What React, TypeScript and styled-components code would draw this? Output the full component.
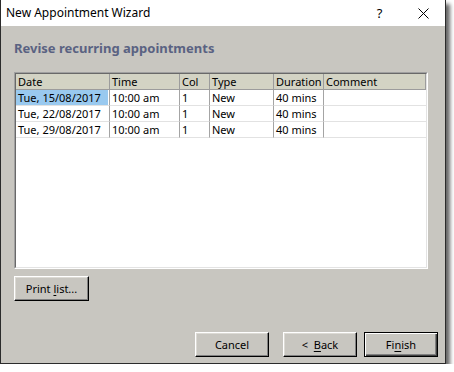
import React from "react";
import styled, { createGlobalStyle } from "styled-components";

const Global = createGlobalStyle`
  html, body { margin: 0; padding: 0; background: #ffffff; }
  * { box-sizing: border-box; }
`;

const FONT = `"Noto Sans", "Liberation Sans", Arial, sans-serif`;

const Dialog = styled.div`
  width: 446px;
  height: 364px;
  display: flex;
  flex-direction: column;
  background: #c8c6c0;
  border: 1px solid #2b2b2b;
  border-top: none;
  box-shadow: 4px 4px 4px rgba(0, 0, 0, 0.6);
  font-family: ${FONT};
`;

const TitleBar = styled.div`
  height: 26px;
  flex: none;
  display: flex;
  align-items: center;
  background: #ffffff;
  padding-left: 5px;
`;

const TitleText = styled.div`
  flex: 1;
  font-size: 12px;
  color: #000;
  line-height: 16px;
`;

const CaptionButton = styled.div<{ $w: number }>`
  width: ${(p) => p.$w}px;
  height: 26px;
  display: flex;
  align-items: center;
  justify-content: center;
  font-size: 13px;
  color: #000;
`;

const Body = styled.div`
  flex: 1;
  display: flex;
  flex-direction: column;
  align-items: flex-start;
  padding: 14px 7px 6px 13px;
`;

const Heading = styled.div`
  font-size: 13px;
  font-weight: 700;
  line-height: 16px;
  color: #5a6282;
`;

const ListFrame = styled.div`
  margin-top: 16px;
  width: 414px;
  height: 197px;
  display: flex;
  border-style: solid;
  border-width: 1px;
  border-color: #a0a0a0 #ffffff #ffffff #a0a0a0;
`;

const ListInner = styled.div`
  flex: 1;
  background: #ffffff;
  border-style: solid;
  border-width: 1px;
  border-color: #696969 #e3e3e3 #e3e3e3 #696969;
`;

const Grid = styled.div`
  display: grid;
  grid-template-columns: 94px 70px 30px 64px 50px 102px;
  align-content: start;
`;

const HeaderCell = styled.div`
  height: 16px;
  padding-left: 2px;
  background: #d3d3c4;
  border-right: 1px solid #9c9c9c;
  border-bottom: 1px solid #9c9c9c;
  font-size: 11px;
  line-height: 15px;
  color: #000;
  white-space: nowrap;
  overflow: hidden;
`;

const Cell = styled.div<{ $last?: boolean }>`
  height: 16px;
  padding-left: 2px;
  border-right: ${(p) => (p.$last ? "none" : "1px solid #a4a4a4")};
  border-bottom: 1px solid #e2e2e2;
  font-size: 11px;
  line-height: 15px;
  color: #000;
  white-space: nowrap;
  overflow: hidden;
`;

const Selection = styled.span`
  display: block;
  margin-left: -2px;
  padding-left: 2px;
  margin-right: 1px;
  background: #99c9ef;
`;

const Button = styled.button<{ $default?: boolean; $w?: number; $gapAfter?: number }>`
  width: ${(p) => p.$w ?? 74}px;
  height: 25px;
  padding: 0;
  margin: 0 ${(p) => p.$gapAfter ?? 0}px 0 0;
  background: #c8c6c0;
  font-family: ${FONT};
  font-size: 11px;
  line-height: 15px;
  color: #000;
  border-style: solid;
  border-width: 1px;
  border-color: ${(p) =>
    p.$default ? "#000 #000 #000 #000" : "#ffffff #000000 #000000 #ffffff"};
  box-shadow: ${(p) =>
    p.$default
      ? "inset 1px 1px #ffffff, inset -1px -1px #404040, inset -2px -2px #808080"
      : "inset -1px -1px #808080, inset 1px 1px #dcdad4"};
  display: flex;
  align-items: center;
  justify-content: center;
  cursor: default;
`;

const Key = styled.span`
  text-decoration: underline;
  text-underline-offset: 2px;
`;

const PrintButton = styled(Button)`
  margin-top: 7px;
`;

const Footer = styled.div`
  margin-top: auto;
  align-self: stretch;
  display: flex;
  justify-content: flex-end;
  gap: 7px;
`;

type Row = { date: string; time: string; col: string; type: string; dur: string; comment: string };

const rows: Row[] = [
  { date: "Tue, 15/08/2017", time: "10:00 am", col: "1", type: "New", dur: "40 mins", comment: "" },
  { date: "Tue, 22/08/2017", time: "10:00 am", col: "1", type: "New", dur: "40 mins", comment: "" },
  { date: "Tue, 29/08/2017", time: "10:00 am", col: "1", type: "New", dur: "40 mins", comment: "" },
];

const headers = ["Date", "Time", "Col", "Type", "Duration", "Comment"];

const CloseIcon = () => (
  <svg width="11" height="11" viewBox="0 0 11 11">
    <path d="M0.5 0.5 L10.5 10.5 M10.5 0.5 L0.5 10.5" stroke="#000" strokeWidth="1" fill="none" />
  </svg>
);

export default function App() {
  return (
    <>
      <Global />
      <Dialog>
        <TitleBar>
          <TitleText>New Appointment Wizard</TitleText>
          <CaptionButton $w={45}>?</CaptionButton>
          <CaptionButton $w={43}>
            <CloseIcon />
          </CaptionButton>
        </TitleBar>
        <Body>
          <Heading>Revise recurring appointments</Heading>
          <ListFrame>
            <ListInner>
              <Grid>
                {headers.map((h) => (
                  <HeaderCell key={h}>{h}</HeaderCell>
                ))}
                {rows.map((r, i) => (
                  <React.Fragment key={i}>
                    <Cell>{i === 0 ? <Selection>{r.date}</Selection> : r.date}</Cell>
                    <Cell>{r.time}</Cell>
                    <Cell>{r.col}</Cell>
                    <Cell>{r.type}</Cell>
                    <Cell>{r.dur}</Cell>
                    <Cell $last>{r.comment}</Cell>
                  </React.Fragment>
                ))}
              </Grid>
            </ListInner>
          </ListFrame>
          <PrintButton $w={75}>
            Print&nbsp;<Key>l</Key>ist...
          </PrintButton>
          <Footer>
            <Button $gapAfter={7}>Cancel</Button>
            <Button>
              &lt;&nbsp;&nbsp;<Key>B</Key>ack
            </Button>
            <Button $default>
              Fi<Key>n</Key>ish
            </Button>
          </Footer>
        </Body>
      </Dialog>
    </>
  );
}
